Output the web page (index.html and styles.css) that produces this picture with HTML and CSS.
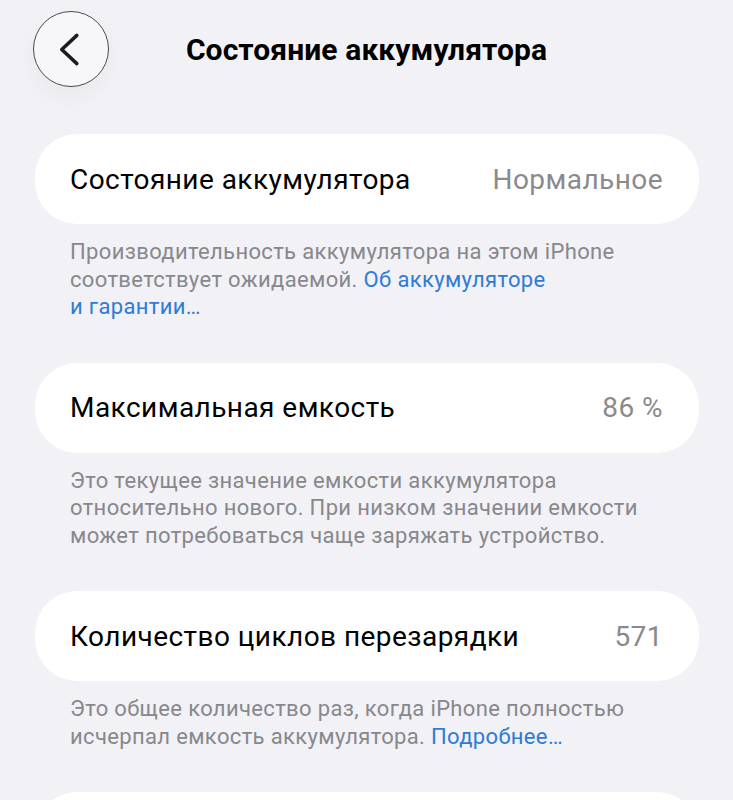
FILE: index.html
```html
<!DOCTYPE html>
<html lang="ru">
<head>
<meta charset="utf-8">
<link rel="stylesheet" href="styles.css">
</head>
<body>
<header class="nav">
  <button class="back" aria-label="Назад">
    <svg width="76" height="76" viewBox="0 0 76 76"><path d="M44 24 L28.5 38.5 L44 53" fill="none" stroke="#1c1c1e" stroke-width="3.6" stroke-linecap="round" stroke-linejoin="round"/></svg>
  </button>
  <h1 class="title">Состояние аккумулятора</h1>
  <span></span>
</header>
<main class="list">
  <section class="group">
    <div class="card"><span class="label">Состояние аккумулятора</span><span class="value">Нормальное</span></div>
    <p class="note">Производительность аккумулятора на этом iPhone<br>соответствует ожидаемой. <a class="link">Об аккумуляторе<br>и гарантии…</a></p>
  </section>
  <section class="group">
    <div class="card"><span class="label">Максимальная емкость</span><span class="value">86 %</span></div>
    <p class="note">Это текущее значение емкости аккумулятора<br>относительно нового. При низком значении емкости<br>может потребоваться чаще заряжать устройство.</p>
  </section>
  <section class="group">
    <div class="card"><span class="label">Количество циклов перезарядки</span><span class="value">571</span></div>
    <p class="note">Это общее количество раз, когда iPhone полностью<br>исчерпал емкость аккумулятора. <a class="link">Подробнее…</a></p>
  </section>
  <section class="group">
    <div class="card"></div>
  </section>
</main>
</body>
</html>
```
FILE: styles.css
```css
* { box-sizing: border-box; }
html, body { margin: 0; padding: 0; }
body {
  background: #f1f1f6;
  font-family: Roboto, "Noto Sans", sans-serif;
  width: 733px;
  height: 800px;
  overflow: hidden;
}
.nav {
  display: grid;
  grid-template-columns: 1fr auto 1fr;
  align-items: center;
  padding: 11px 33px 0 33px;
  height: 134px;
  align-content: start;
}
.back {
  width: 76px;
  height: 76px;
  border-radius: 50%;
  border: 1.2px solid #4a4a4c;
  background: #f7f7f9;
  padding: 0;
  display: flex;
  align-items: center;
  justify-content: center;
  box-shadow: 0 10px 26px rgba(0,0,0,0.04);
}
.back svg { display: block; }
.title {
  margin: 0;
  font-size: 30px;
  font-weight: 700;
  color: #000;
  letter-spacing: 0.1px;
}
.list {
  display: flex;
  flex-direction: column;
  gap: 42px;
  padding: 0 34px 0 35px;
}
.card {
  background: #fff;
  border-radius: 42px;
  height: 90px;
  display: flex;
  align-items: center;
  justify-content: space-between;
  padding: 0 36px 0 35px;
  font-size: 28px;
  letter-spacing: 0.45px;
}
.label { color: #000; }
.value { color: #8a8a8e; }
.note {
  margin: 0;
  padding: 14px 35px 0 35px;
  font-size: 22px;
  line-height: 27.5px;
  letter-spacing: 0.35px;
  color: #88888c;
}
.link { color: #2f7bd5; }
```
